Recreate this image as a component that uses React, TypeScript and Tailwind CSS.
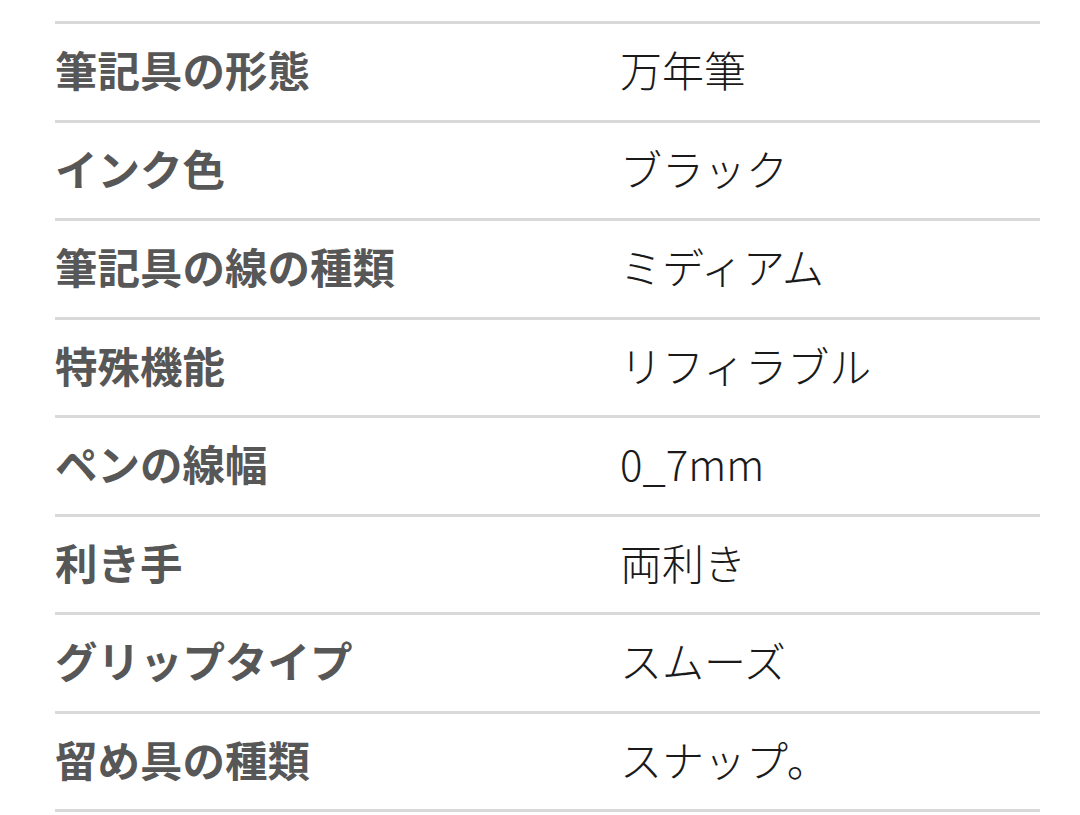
import React from "react";

const rows: [string, string][] = [
  ["筆記具の形態", "万年筆"],
  ["インク色", "ブラック"],
  ["筆記具の線の種類", "ミディアム"],
  ["特殊機能", "リフィラブル"],
  ["ペンの線幅", "0_7mm"],
  ["利き手", "両利き"],
  ["グリップタイプ", "スムーズ"],
  ["留め具の種類", "スナップ。"],
];

export default function App() {
  return (
    <div
      className="w-[1080px] h-[815px] bg-white overflow-hidden pt-[21px] pl-[55px]"
      style={{ fontFamily: '"Noto Sans CJK JP", "Noto Sans", sans-serif' }}
    >
      <div className="w-[985px] border-b-[3px] border-[#d9d9d9]">
        {rows.map(([k, v]) => (
          <div
            key={k}
            className="flex items-center h-[98.5px] pb-[5px] border-t-[3px] border-[#d9d9d9]"
          >
            <div className="w-[565px] text-[42.5px] font-bold text-[#575757] leading-none">
              {k}
            </div>
            <div className="flex-1 text-[42px] font-light text-[#1a1a1a] leading-none">
              {v}
            </div>
          </div>
        ))}
      </div>
    </div>
  );
}
